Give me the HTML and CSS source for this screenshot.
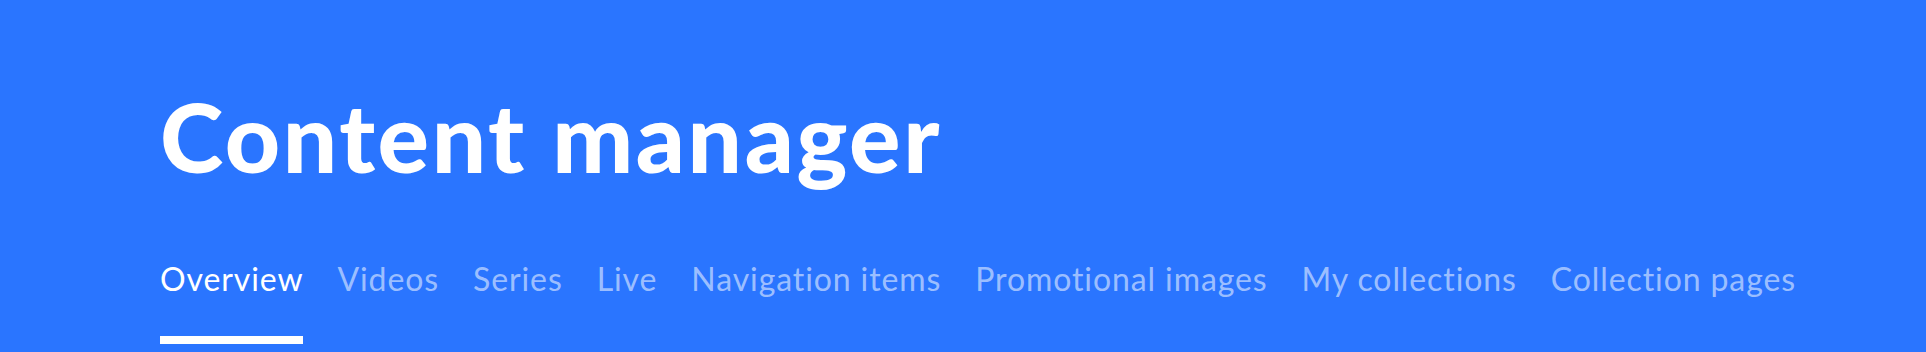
FILE: index.html
```html
<!DOCTYPE html>
<html lang="en">
<head>
    <meta charset="UTF-8">
    <meta name="viewport" content="width=device-width, initial-scale=1.0">
    <title>Content manager</title>
    <link rel="stylesheet" href="styles.css">
</head>
<body>
    <header class="page-header">
        <h1>Content manager</h1>
        <nav class="tabs">
            <a href="#" class="tab active">Overview</a>
            <a href="#" class="tab">Videos</a>
            <a href="#" class="tab">Series</a>
            <a href="#" class="tab">Live</a>
            <a href="#" class="tab">Navigation items</a>
            <a href="#" class="tab">Promotional images</a>
            <a href="#" class="tab">My collections</a>
            <a href="#" class="tab">Collection pages</a>
        </nav>
    </header>
</body>
</html>
```

FILE: styles.css
```css
body {
    margin: 0;
    padding: 0;
    background-color: #2a75ff;
    font-family: Lato, "Open Sans", sans-serif;
}

.page-header {
    padding: 78px 100px 8px 160px;
    background-color: #2a75ff;
    color: #fff;
}

.page-header h1 {
    margin: 0;
    font-size: 96px;
    line-height: 1.2;
    font-weight: 900;
    letter-spacing: 2.6px;
}

.tabs {
    display: flex;
    gap: 34px;
    margin-top: 67px;
}

.tab {
    flex-shrink: 0;
    white-space: nowrap;
    font-size: 32px;
    line-height: 1.2;
    letter-spacing: 0.9px;
    color: rgba(255, 255, 255, 0.55);
    text-decoration: none;
    padding-bottom: 37px;
    border-bottom: 8px solid transparent;
}

.tab.active {
    color: #fff;
    border-bottom-color: #fff;
}
```
